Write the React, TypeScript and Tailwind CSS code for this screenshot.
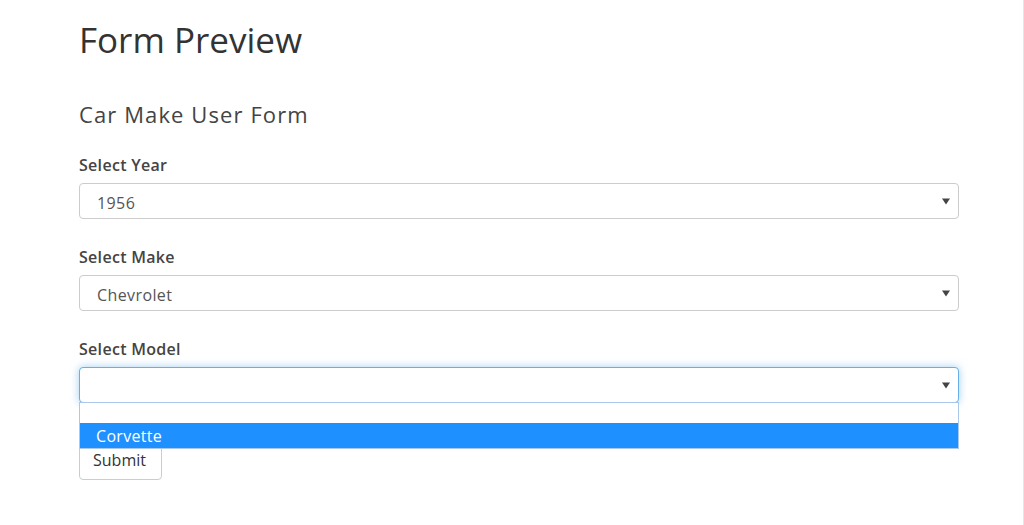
const font = { fontFamily: '"Open Sans", "Noto Sans", sans-serif' };

function Arrow() {
  return (
    <svg width="8" height="7" viewBox="0 0 8 7" className="shrink-0">
      <path d="M0 0.5 L8 0.5 L4 6.5 Z" fill="#444" />
    </svg>
  );
}

function FakeSelect({
  value,
  focused,
  children,
}: {
  value: string;
  focused?: boolean;
  children?: React.ReactNode;
}) {
  return (
    <div className="relative">
      <div
        className={
          "flex h-[36px] w-[880px] items-center justify-between rounded-[4px] border bg-white pl-[17px] pr-[8px] text-[16px] text-[#555] " +
          (focused
            ? "border-[#66afe9] shadow-[0_0_8px_rgba(102,175,233,0.6)]"
            : "border-[#ccc]")
        }
      >
        <span className="pt-[4px] tracking-[0.4px]">{value}</span>
        <Arrow />
      </div>
      {children}
    </div>
  );
}

export default function App() {
  return (
    <div
      className="h-[525px] w-[1024px] border-r border-[#e6e6e6] bg-white text-[#333]"
      style={font}
    >
      <div className="flex flex-col pl-[79px] pt-[20px]">
        <h1 className="text-[35px] leading-[40px] font-normal">Form Preview</h1>
        <h2 className="mt-[40px] text-[22px] leading-[28px] font-normal tracking-[1.1px] text-[#444]">
          Car Make User Form
        </h2>

        <label className="mt-[27px] text-[16px] leading-[20px] font-semibold tracking-[0.3px] text-[#444]">
          Select Year
        </label>
        <div className="mt-[8px]">
          <FakeSelect value="1956" />
        </div>

        <label className="mt-[28px] text-[16px] leading-[20px] font-semibold tracking-[0.3px] text-[#444]">
          Select Make
        </label>
        <div className="mt-[8px]">
          <FakeSelect value="Chevrolet" />
        </div>

        <label className="mt-[28px] text-[16px] leading-[20px] font-semibold tracking-[0.3px] text-[#444]">
          Select Model
        </label>
        <div className="relative z-10 mt-[8px]">
          <FakeSelect value="" focused>
            <ul className="absolute left-0 top-[35px] w-[880px] border border-[#a9c8ea] bg-white text-[16px]">
              <li className="h-[20px]" />
              <li className="flex h-[25px] items-center bg-[#1e90ff] pl-[16px] tracking-[0.3px] text-white">
                Corvette
              </li>
            </ul>
          </FakeSelect>
        </div>

        <button
          type="button"
          className="mt-[37px] h-[40px] w-[83px] rounded-[4px] border border-[#ccc] bg-white pl-[1px] text-left indent-[12px] text-[16px] text-[#333]"
        >
          Submit
        </button>
      </div>
    </div>
  );
}
